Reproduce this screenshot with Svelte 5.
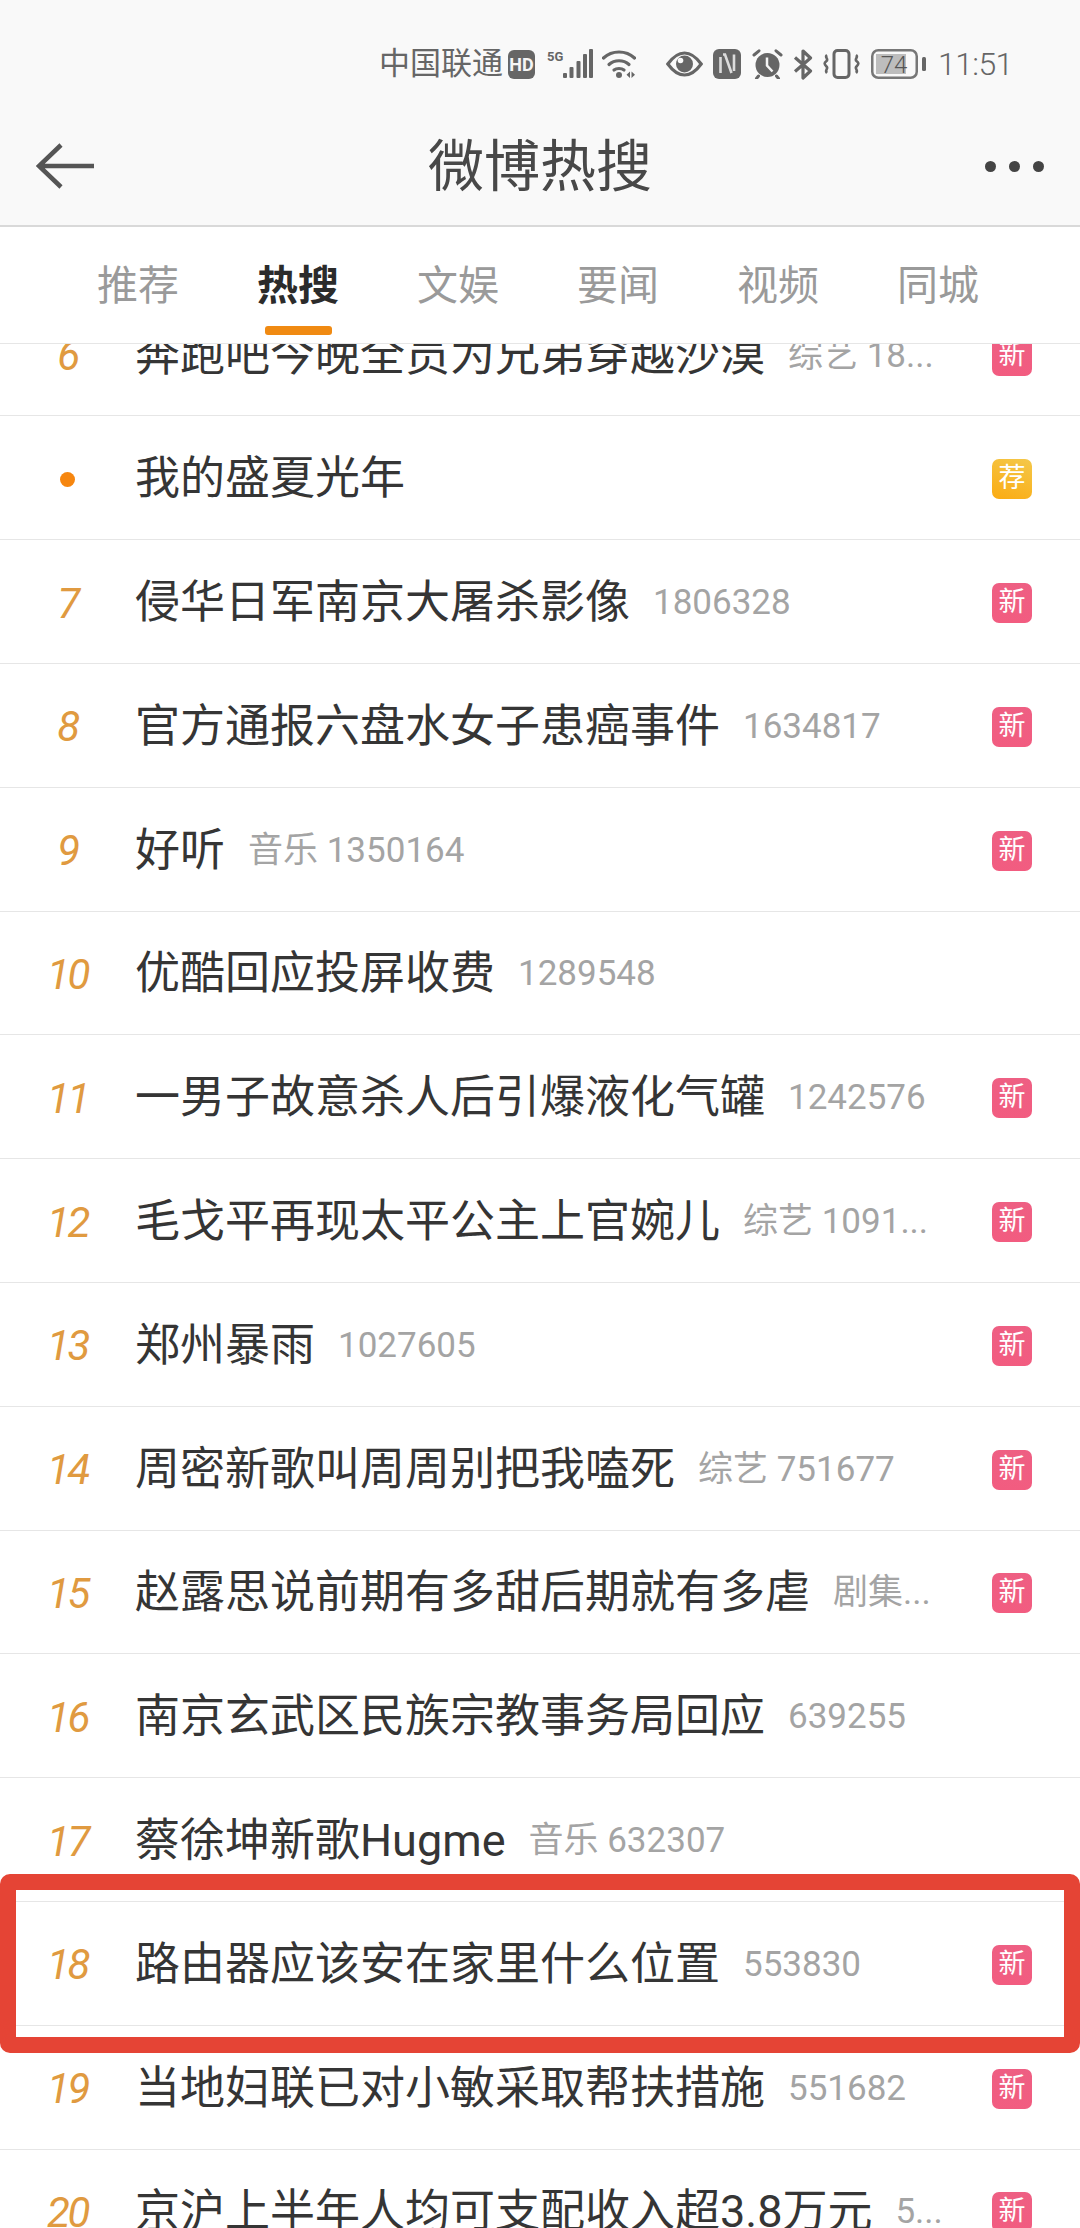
<script>
  const tabs = ['推荐', '热搜', '文娱', '要闻', '视频', '同城'];
  const rows = [
    { rank: '6', title: '奔跑吧今晚全员为兄弟穿越沙漠', sub: '综艺 18...', badge: 'new' },
    { rank: '•', title: '我的盛夏光年', sub: '', badge: 'rec' },
    { rank: '7', title: '侵华日军南京大屠杀影像', sub: '1806328', badge: 'new' },
    { rank: '8', title: '官方通报六盘水女子患癌事件', sub: '1634817', badge: 'new' },
    { rank: '9', title: '好听', sub: '音乐 1350164', badge: 'new' },
    { rank: '10', title: '优酷回应投屏收费', sub: '1289548', badge: '' },
    { rank: '11', title: '一男子故意杀人后引爆液化气罐', sub: '1242576', badge: 'new' },
    { rank: '12', title: '毛戈平再现太平公主上官婉儿', sub: '综艺 1091...', badge: 'new' },
    { rank: '13', title: '郑州暴雨', sub: '1027605', badge: 'new' },
    { rank: '14', title: '周密新歌叫周周别把我嗑死', sub: '综艺 751677', badge: 'new' },
    { rank: '15', title: '赵露思说前期有多甜后期就有多虐', sub: '剧集...', badge: 'new' },
    { rank: '16', title: '南京玄武区民族宗教事务局回应', sub: '639255', badge: '' },
    { rank: '17', title: '蔡徐坤新歌Hugme', sub: '音乐 632307', badge: '' },
    { rank: '18', title: '路由器应该安在家里什么位置', sub: '553830', badge: 'new' },
    { rank: '19', title: '当地妇联已对小敏采取帮扶措施', sub: '551682', badge: 'new' },
    { rank: '20', title: '京沪上半年人均可支配收入超3.8万元', sub: '5...', badge: 'new' }
  ];
</script>

<div class="page">
  <header class="top">
    <div class="status">
      <span class="carrier">中国联通</span>
      <svg class="i-hd" width="27" height="29" viewBox="0 0 27 29"><rect width="27" height="29" rx="6" fill="#666"/><text x="13.5" y="20.5" text-anchor="middle" class="hd-text">HD</text></svg>
      <svg class="i-sig" width="46" height="30" viewBox="0 0 46 30">
        <text x="0" y="12" class="g5-text">5G</text>
        <g fill="#666"><rect x="16" y="24" width="4" height="5" rx="1"/><rect x="22.500" y="18" width="4" height="11" rx="1"/><rect x="29.500" y="12" width="4" height="17" rx="1"/><rect x="36" y="5" width="4" height="24" rx="1"/><rect x="42" y="0" width="4" height="29" rx="1"/></g>
      </svg>
      <svg class="i-wifi" width="34" height="30" viewBox="0 0 34 30">
        <g fill="none" stroke="#666" stroke-width="3.200" stroke-linecap="round"><path d="M1.500 9C10 1 24 1 32.500 9"/><path d="M7 15.500C12.500 10.500 21.500 10.500 27 15.500"/><path d="M12 21C14.500 19 19.500 19 22 21"/></g>
        <circle cx="17" cy="26" r="3" fill="#666"/><path d="M28 22.500v6.500l-3.500-3.200zM29.500 22.500v6.500l3.500-3.200z" fill="#666"/>
      </svg>
      <svg class="i-eye" width="37" height="26" viewBox="0 0 37 26">
        <path d="M1.800 13C8 4.500 13 2 18.500 2S29 4.500 35.200 13C29 21.500 24 24 18.500 24S8 21.500 1.800 13Z" fill="none" stroke="#666" stroke-width="3.200"/>
        <circle cx="18.500" cy="13" r="8.500" fill="#666"/><circle cx="14.500" cy="9.500" r="2.800" fill="#f9f9f9"/>
      </svg>
      <svg class="i-nfc" width="28" height="30" viewBox="0 0 28 30">
        <rect width="28" height="30" rx="6" fill="#666"/>
        <path d="M7.500 8V24M10 5.500H12L18.500 24M21 5.500V22" fill="none" stroke="#dcdcdc" stroke-width="2.600"/>
      </svg>
      <svg class="i-alarm" width="31" height="30" viewBox="0 0 31 30">
        <circle cx="15.500" cy="16" r="12" fill="#666"/>
        <path d="M15 8.500V16.500L20.500 22.500" fill="none" stroke="#f5f5f5" stroke-width="2.500"/>
        <path d="M2 6L7 1.800M29 6L24 1.800M6.500 27L4.500 29.500M24.500 27L26.500 29.500" stroke="#666" stroke-width="3" stroke-linecap="round"/>
      </svg>
      <svg class="i-bt" width="20" height="31" viewBox="0 0 20 31">
        <path d="M2 8.500L17.500 22L10 29V2L17.500 9L2 22.500" fill="none" stroke="#666" stroke-width="3.200" stroke-linejoin="round"/>
      </svg>
      <svg class="i-vib" width="37" height="30" viewBox="0 0 37 30">
        <rect x="11" y="1.500" width="15" height="27" rx="3.500" fill="none" stroke="#666" stroke-width="3"/>
        <path d="M4 6C1 8 6 10 3.500 12S1 15 3.500 17.500S1 21 4 24M33 6C36 8 31 10 33.500 12S36 15 33.500 17.500S36 21 33 24" fill="none" stroke="#666" stroke-width="2.600"/>
      </svg>
      <svg class="i-bat" width="55" height="30" viewBox="0 0 55 30">
        <rect x="5" y="5" width="30" height="20" fill="#bdbdbd"/>
        <rect x="1.250" y="1.250" width="44.500" height="27.500" rx="6" fill="none" stroke="#777" stroke-width="2.500"/>
        <rect x="51" y="8" width="4" height="14" rx="1.500" fill="#666"/>
        <text x="23" y="23.500" text-anchor="middle" class="bat-text">74</text>
      </svg>
      <span class="time">11:51</span>
    </div>
    <nav class="nav">
      <svg class="back" width="60" height="46" viewBox="0 0 60 46"><path d="M58 23H4M25 2L3 23L25 44" fill="none" stroke="#555" stroke-width="4.500"/></svg>
      <h1>微博热搜</h1>
      <div class="dots"><i></i><i></i><i></i></div>
    </nav>
  </header>

  <div class="tabs">
    {#each tabs as t, i}
      <div class="tab" class:active={i === 1}>{t}</div>
    {/each}
  </div>

  <main class="list">
    <div class="scroll">
      {#each rows as r}
        <div class="row">
          {#if r.rank === '•'}
            <span class="rank"><i class="dot"></i></span>
          {:else}
            <span class="rank">{r.rank}</span>
          {/if}
          <span class="title">{r.title}</span>
          {#if r.sub}<span class="sub">{r.sub}</span>{/if}
          {#if r.badge === 'new'}<span class="badge new">新</span>{/if}
          {#if r.badge === 'rec'}<span class="badge rec">荐</span>{/if}
        </div>
      {/each}
    </div>
  </main>

  <div class="highlight"></div>
</div>

<style>
  :global(body) {
    margin: 0;
    background: #fff;
  }
  .page {
    position: relative;
    width: 1080px;
    height: 2228px;
    overflow: hidden;
    display: flex;
    flex-direction: column;
    background: #fff;
    font-family: Roboto, "Noto Sans CJK SC", sans-serif;
  }
  .top {
    flex: none;
    height: 225px;
    background: #f9f9f9;
    border-bottom: 2px solid #d9d9d9;
  }
  .status {
    height: 46px;
    padding-top: 41px;
    padding-right: 67px;
    display: flex;
    justify-content: flex-end;
    align-items: center;
    color: #666;
  }
  .carrier {
    font-size: 31px;
    line-height: 46px;
    width: 124px;
    white-space: nowrap;
  }
  .time {
    font-size: 32px;
    font-weight: 300;
    width: 75px;
    margin-left: 12px;
    white-space: nowrap;
    letter-spacing: -0.6px;
  }
  .i-hd { margin-left: 5px; }
  .i-sig { margin-left: 12px; }
  .i-wifi { margin-left: 9px; }
  .i-eye { margin-left: 30px; }
  .i-nfc { margin-left: 10px; }
  .i-alarm { margin-left: 11px; }
  .i-bt { margin-left: 10px; }
  .i-vib { margin-left: 10px; }
  .i-bat { margin-left: 11px; }
  .hd-text { font: 700 18px Roboto, sans-serif; fill: #f5f5f5; }
  .g5-text { font: 700 13px Roboto, sans-serif; fill: #666; }
  .bat-text { font: 300 24px Roboto, sans-serif; fill: #555; }
  .nav {
    height: 120px;
    margin-top: 19px;
    padding: 0 36px 0 36px;
    display: grid;
    grid-template-columns: 1fr auto 1fr;
    align-items: center;
  }
  h1 {
    margin: 2px 0 0;
    font-size: 56px;
    font-weight: 400;
    line-height: 80px;
    color: #484848;
  }
  .dots {
    justify-self: end;
    display: flex;
    gap: 13px;
  }
  .dots i {
    width: 11px;
    height: 11px;
    border-radius: 50%;
    background: #444;
  }
  .tabs {
    flex: none;
    height: 116px;
    padding-left: 58px;
    display: flex;
    border-bottom: 1px solid #e6e6e6;
  }
  .tab {
    position: relative;
    width: 160px;
    padding-top: 30px;
    text-align: center;
    font-size: 41px;
    line-height: 58px;
    color: #9a9a9a;
  }
  .tab.active {
    color: #2b2b2b;
    font-weight: 700;
  }
  .tab.active::after {
    content: "";
    position: absolute;
    left: 47px;
    bottom: 8px;
    width: 67px;
    height: 9px;
    border-radius: 3px;
    background: #f08a12;
  }
  .list {
    flex: 1;
    overflow: hidden;
  }
  .scroll {
    margin-top: -51.400px;
  }
  .row {
    box-sizing: border-box;
    height: 123.800px;
    padding: 3px 48px 0 0;
    display: flex;
    align-items: center;
    border-bottom: 1.500px solid #e6e6e6;
  }
  .rank {
    flex: none;
    width: 135px;
    display: flex;
    justify-content: center;
    font-size: 42px;
    font-style: italic;
    font-weight: 400;
    letter-spacing: -2.500px;
    color: #e09a40;
  }
  .dot {
    width: 15px;
    height: 15px;
    border-radius: 50%;
    background: #f6860f;
  }
  .title {
    font-size: 45px;
    line-height: 64px;
    color: #353535;
    white-space: nowrap;
  }
  .sub {
    margin-left: 23px;
    font-size: 35px;
    line-height: 64px;
    color: #a4a4a4;
    white-space: nowrap;
  }
  .badge {
    flex: none;
    margin-left: auto;
    width: 40px;
    height: 40px;
    border-radius: 7px;
    text-align: center;
    font-size: 27px;
    line-height: 39px;
    color: #fff;
  }
  .new {
    background: linear-gradient(180deg, #ee5f83, #f25c80);
  }
  .rec {
    background: linear-gradient(20deg, #fbab12, #f4c84a);
  }
  .highlight {
    position: absolute;
    left: 0;
    top: 1874px;
    box-sizing: border-box;
    width: 1080px;
    height: 179px;
    border: 16px solid #e54435;
    border-radius: 10px;
    pointer-events: none;
  }
</style>
